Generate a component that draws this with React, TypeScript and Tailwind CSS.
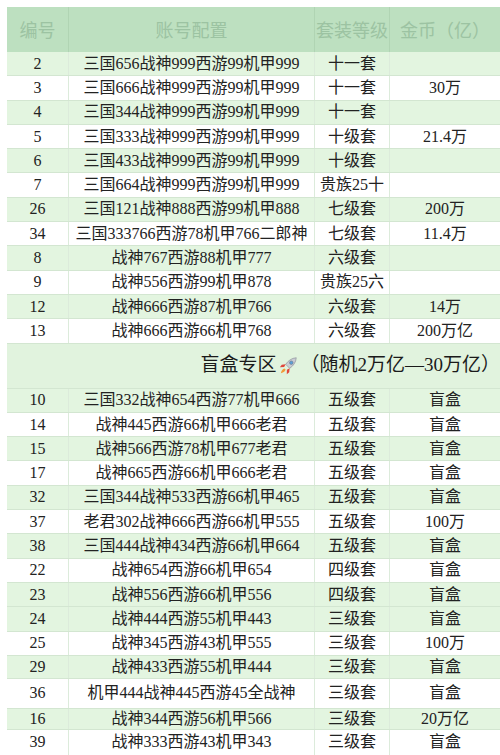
import React from "react";

type Row = { no: string; config: string; level: string; coin: string; green: boolean; h?: string };

const FONT = "font-['Liberation_Serif','Noto_Sans_CJK_SC',serif]";

// top block, before the blind-box section
const topRows: Row[] = [
  { no: "2", config: "三国656战神999西游99机甲999", level: "十一套", coin: "", green: true },
  { no: "3", config: "三国666战神999西游99机甲999", level: "十一套", coin: "30万", green: false },
  { no: "4", config: "三国344战神999西游99机甲999", level: "十一套", coin: "", green: true },
  { no: "5", config: "三国333战神999西游99机甲999", level: "十级套", coin: "21.4万", green: false },
  { no: "6", config: "三国433战神999西游99机甲999", level: "十级套", coin: "", green: true },
  { no: "7", config: "三国664战神999西游99机甲999", level: "贵族25十", coin: "", green: false },
  { no: "26", config: "三国121战神888西游99机甲888", level: "七级套", coin: "200万", green: true },
  { no: "34", config: "三国333766西游78机甲766二郎神", level: "七级套", coin: "11.4万", green: false },
  { no: "8", config: "战神767西游88机甲777", level: "六级套", coin: "", green: true },
  { no: "9", config: "战神556西游99机甲878", level: "贵族25六", coin: "", green: false },
  { no: "12", config: "战神666西游87机甲766", level: "六级套", coin: "14万", green: true },
  { no: "13", config: "战神666西游66机甲768", level: "六级套", coin: "200万亿", green: false },
];

const boxRows: Row[] = [
  { no: "10", config: "三国332战神654西游77机甲666", level: "五级套", coin: "盲盒", green: true },
  { no: "14", config: "战神445西游66机甲666老君", level: "五级套", coin: "盲盒", green: false },
  { no: "15", config: "战神566西游78机甲677老君", level: "五级套", coin: "盲盒", green: true },
  { no: "17", config: "战神665西游66机甲666老君", level: "五级套", coin: "盲盒", green: false },
  { no: "32", config: "三国344战神533西游66机甲465", level: "五级套", coin: "盲盒", green: true },
  { no: "37", config: "老君302战神666西游66机甲555", level: "五级套", coin: "100万", green: false },
  { no: "38", config: "三国444战神434西游66机甲664", level: "五级套", coin: "盲盒", green: true },
  { no: "22", config: "战神654西游66机甲654", level: "四级套", coin: "盲盒", green: false },
  { no: "23", config: "战神556西游66机甲556", level: "四级套", coin: "盲盒", green: true },
  { no: "24", config: "战神444西游55机甲443", level: "三级套", coin: "盲盒", green: true },
  { no: "25", config: "战神345西游43机甲555", level: "三级套", coin: "100万", green: false },
  { no: "29", config: "战神433西游55机甲444", level: "三级套", coin: "盲盒", green: true, h: "h-[23px]" },
  { no: "36", config: "机甲444战神445西游45全战神", level: "三级套", coin: "盲盒", green: false, h: "h-[30px]" },
  { no: "16", config: "战神344西游56机甲566", level: "三级套", coin: "20万亿", green: true, h: "h-[21px]" },
  { no: "39", config: "战神333西游43机甲343", level: "三级套", coin: "盲盒", green: false, h: "h-[26px]" },
];

function Rocket() {
  return (
    <svg width="22" height="22" viewBox="0 0 20 20" className="mx-[1px] inline-block">
      <path d="M17.5 2.5c-4 .3-7.2 2.4-9.6 6l3.6 3.6c3.6-2.4 5.7-5.6 6-9.6z" fill="#c9ccd4" stroke="#8b8f99" strokeWidth="0.6" />
      <circle cx="13" cy="7" r="1.6" fill="#5aa0d8" stroke="#6b7280" strokeWidth="0.5" />
      <path d="M7.9 8.5 4.3 8.9 2.6 11.1l3.9-.1z" fill="#e0463c" />
      <path d="M11.5 12.1l-.4 3.6-2.2 1.7.1-3.9z" fill="#e0463c" />
      <path d="M6.8 12.2c-1.6.4-2.7 1.6-3.3 4.3 2.7-.6 3.9-1.7 4.3-3.3z" fill="#f29a38" />
    </svg>
  );
}

function DataRow({ r }: { r: Row }) {
  const bg = r.green ? "bg-[#e3f5e0]" : "bg-white";
  const h = r.h ?? "h-[24.3px]";
  return (
    <div className={`grid grid-cols-[62px_246px_75px_110px] ${h} ${bg} border-b border-[#d3e6d1] text-[16px] text-[#222]`}>
      <div className="flex items-center justify-center overflow-hidden border-r border-[#dcebdb]">{r.no}</div>
      <div className="flex items-center justify-center overflow-hidden whitespace-nowrap border-r border-[#dcebdb]">{r.config}</div>
      <div className="flex items-center justify-center overflow-hidden whitespace-nowrap border-r border-[#dcebdb]">{r.level}</div>
      <div className="flex items-center justify-center overflow-hidden whitespace-nowrap">{r.coin}</div>
    </div>
  );
}

export default function App() {
  return (
    <div className={`h-[755px] w-[500px] overflow-hidden bg-white pl-[7px] pt-[7px] ${FONT}`}>
      <div className="w-[493px]">
        <div className="grid h-[45px] grid-cols-[62px_246px_75px_110px] bg-[#bde0c0] font-['Noto_Sans_CJK_SC',sans-serif] text-[18px] text-[#9cc3a2]">
          <div className="flex items-center justify-center border-r border-[#b0d4b3]">编号</div>
          <div className="flex items-center justify-center border-r border-[#b0d4b3]">账号配置</div>
          <div className="flex items-center justify-center whitespace-nowrap border-r border-[#b0d4b3]">套装等级</div>
          <div className="flex items-center justify-center whitespace-nowrap">金币（亿）</div>
        </div>

        {topRows.map((r) => (
          <DataRow key={r.no} r={r} />
        ))}

        <div className="flex h-[45px] items-center justify-end border-b border-[#d3e6d1] bg-[#e1f3de] text-[19px] text-[#1a1a1a]">
          <span className="whitespace-nowrap">盲盒专区</span>
          <Rocket />
          <span className="whitespace-nowrap">（随机2万亿—30万亿）</span>
        </div>

        {boxRows.map((r) => (
          <DataRow key={r.no} r={r} />
        ))}
      </div>
    </div>
  );
}
